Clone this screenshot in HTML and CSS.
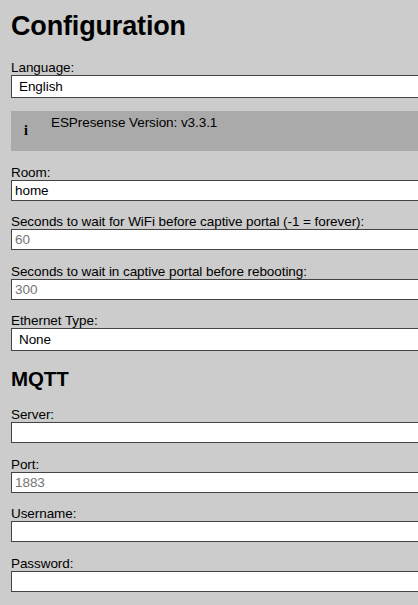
FILE: index.html
```html
<!DOCTYPE html>
<html lang="en">
<head>
<meta charset="utf-8">
<title>Configuration</title>
<link rel="stylesheet" href="styles.css">
</head>
<body>
<main class="page">
<h1>Configuration</h1>
<label for="language">Language:</label>
<div class="select" id="language">English</div>
<div class="notice"><span class="icon">i</span><span>ESPresense Version: v3.3.1</span></div>
<label for="room">Room:</label>
<input id="room" value="home">
<label for="wifi">Seconds to wait for WiFi before captive portal (-1 = forever):</label>
<input id="wifi" placeholder="60">
<label for="portal">Seconds to wait in captive portal before rebooting:</label>
<input id="portal" placeholder="300">
<label for="ethernet">Ethernet Type:</label>
<div class="select" id="ethernet">None</div>
<h2>MQTT</h2>
<label for="server">Server:</label>
<input id="server">
<label for="port">Port:</label>
<input id="port" placeholder="1883">
<label for="username">Username:</label>
<input id="username">
<label for="password">Password:</label>
<input id="password" type="password">
</main>
</body>
</html>
```

FILE: styles.css
```css
* { box-sizing: border-box; }
body {
  margin: 0;
  background: #cccccc;
  color: #000;
  font: 13.5px/16px "Liberation Sans", Arial, sans-serif;
  letter-spacing: -0.07px;
}
.page { padding: 10px 0 0 11px; }
h1 { margin: 0 0 16.9px; font-size: 27px; line-height: 32px; letter-spacing: -0.16px; }
h2 { margin: 15.5px 0 15.5px; font-size: 20.5px; line-height: 24px; letter-spacing: -0.1px; }
label { display: block; height: 16px; padding-top: 1px; white-space: nowrap; }
input, .select {
  display: block;
  width: 100%;
  border: 1px solid #444;
  border-right: 0;
  background: #fff;
  font: inherit;
  letter-spacing: inherit;
}
input { height: 21px; padding: 1px 3px; margin: 0 0 12.5px; border-radius: 0; }
input::placeholder { color: #757575; }
.select { height: 23px; padding: 3px 7px; }
.notice {
  display: flex;
  height: 40px;
  margin: 13px 0;
  padding: 4px 0 0 13px;
  background: #aaa;
}
.icon { width: 27px; padding-top: 8px; font: bold 14px/16px "Liberation Serif", serif; }
```
